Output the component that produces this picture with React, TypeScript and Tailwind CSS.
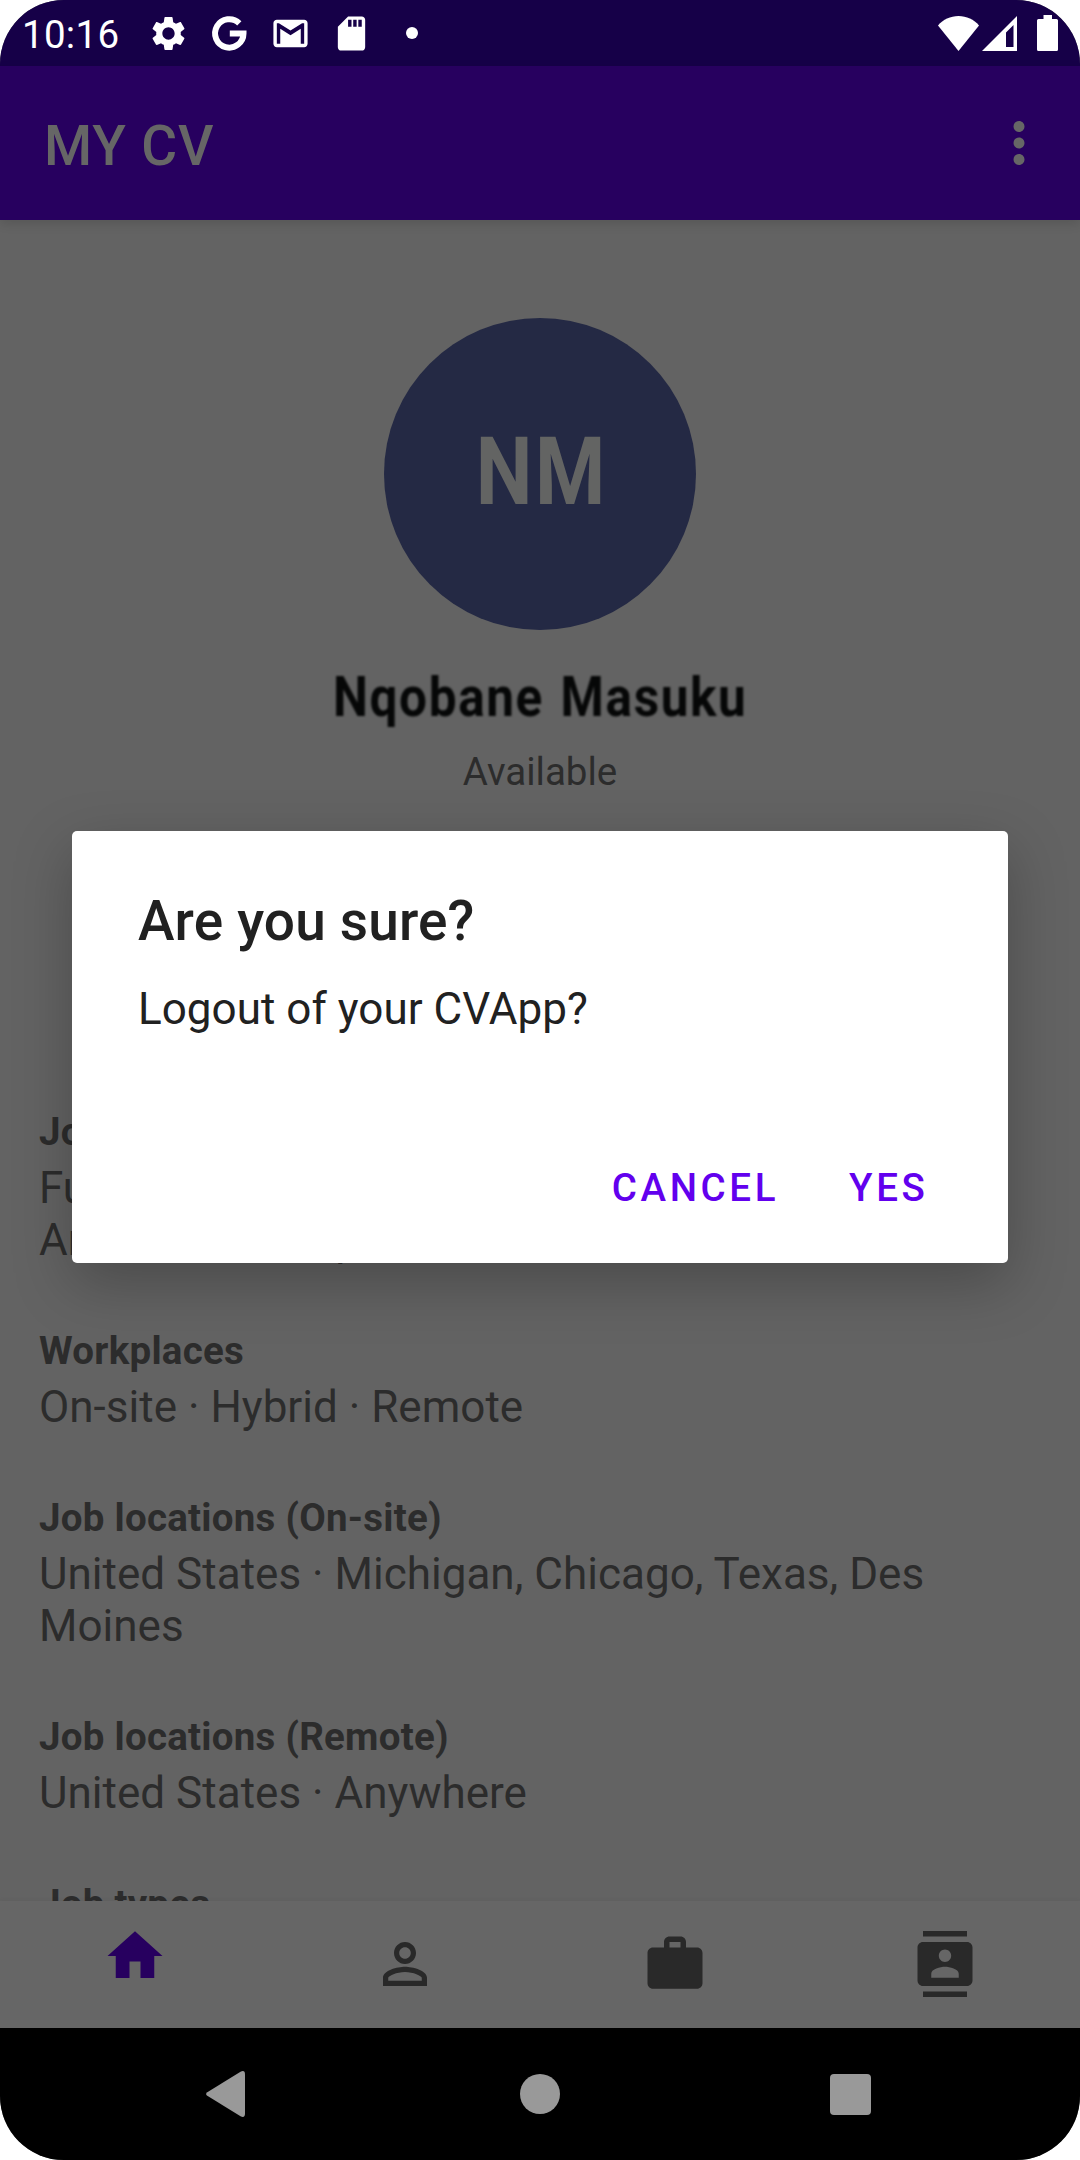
import type { ReactNode } from "react";

function Icon({ d, className = "" }: { d: string; className?: string }) {
  return (
    <svg viewBox="0 0 24 24" className={`shrink-0 ${className}`} fill="currentColor" fillRule="evenodd">
      <path d={d} />
    </svg>
  );
}

const icons = {
  gear: "M19.14 12.94c.04-.3.06-.61.06-.94 0-.32-.02-.64-.07-.94l2.03-1.58c.18-.14.23-.41.12-.61l-1.92-3.32c-.12-.22-.37-.29-.59-.22l-2.39.96c-.5-.38-1.03-.7-1.62-.94l-.36-2.54c-.04-.24-.24-.41-.48-.41h-3.84c-.24 0-.43.17-.47.41l-.36 2.54c-.59.24-1.13.57-1.62.94l-2.39-.96c-.22-.08-.47 0-.59.22L2.74 8.87c-.12.21-.08.47.12.61l2.03 1.58c-.05.3-.09.63-.09.94s.02.64.07.94l-2.03 1.58c-.18.14-.23.41-.12.61l1.92 3.32c.12.22.37.29.59.22l2.39-.96c.5.38 1.03.7 1.62.94l.36 2.54c.05.24.24.41.48.41h3.84c.24 0 .44-.17.47-.41l.36-2.54c.59-.24 1.13-.56 1.62-.94l2.39.96c.22.08.47 0 .59-.22l1.92-3.32c.12-.22.07-.47-.12-.61l-2.01-1.58zM12 15.6c-1.98 0-3.6-1.62-3.6-3.6s1.62-3.6 3.6-3.6 3.6 1.62 3.6 3.6-1.62 3.6-3.6 3.6z",
  mail: "M20 4H4c-1.1 0-2 .9-2 2v12c0 1.1.9 2 2 2h16c1.1 0 2-.9 2-2V6c0-1.1-.9-2-2-2zm0 14h-2V9.25L12 13 6 9.25V18H4V6h1.2l6.8 4.25L18.8 6H20v12z",
  sd: "M18 2h-8L4.02 8 4 20c0 1.1.9 2 2 2h12c1.1 0 2-.9 2-2V4c0-1.1-.9-2-2-2zm-6 6h-2V4h2v4zm3 0h-2V4h2v4zm3 0h-2V4h2v4z",
  more: "M12 8c1.1 0 2-.9 2-2s-.9-2-2-2-2 .9-2 2 .9 2 2 2zm0 2c-1.1 0-2 .9-2 2s.9 2 2 2 2-.9 2-2-.9-2-2-2zm0 6c-1.1 0-2 .9-2 2s.9 2 2 2 2-.9 2-2-.9-2-2-2z",
  home: "M10 20v-6h4v6h5v-8h3L12 3 2 12h3v8z",
  person:
    "M12 5.9c1.16 0 2.1.94 2.1 2.1s-.94 2.1-2.1 2.1S9.9 9.16 9.9 8s.94-2.1 2.1-2.1m0 9c2.97 0 6.1 1.46 6.1 2.1v1.1H5.9V17c0-.64 3.13-2.1 6.1-2.1M12 4C9.79 4 8 5.79 8 8s1.79 4 4 4 4-1.79 4-4-1.79-4-4-4zm0 9c-2.67 0-8 1.34-8 4v3h16v-3c0-2.66-5.33-4-8-4z",
  work: "M20 6h-4V4c0-1.11-.89-2-2-2h-4c-1.11 0-2 .89-2 2v2H4c-1.11 0-1.99.89-1.99 2L2 19c0 1.11.89 2 2 2h16c1.11 0 2-.89 2-2V8c0-1.11-.89-2-2-2zm-6 0h-4V4h4v2z",
  contacts:
    "M20 0H4v2h16V0zM4 24h16v-2H4v2zM20 4H4c-1.1 0-2 .9-2 2v12c0 1.1.9 2 2 2h16c1.1 0 2-.9 2-2V6c0-1.1-.9-2-2-2zm-8 2.75c1.24 0 2.25 1.01 2.25 2.25s-1.01 2.25-2.25 2.25S9.75 10.24 9.75 9 10.76 6.75 12 6.75zM17 17H7v-1.5c0-1.67 3.33-2.5 5-2.5s5 .83 5 2.5V17z",
};

function StatusBar() {
  return (
    <header className="flex h-[66px] items-center justify-between bg-[#160048] pl-[22px] pr-[22px] text-white">
      <div className="flex items-center">
        <span className="w-[125.5px] pt-[3px] text-[38.5px] leading-[63px] tracking-[0.3px]">10:16</span>
        <div className="flex items-center gap-[20px]">
          <Icon d={icons.gear} className="size-[41px]" />
          <svg viewBox="0 0 41 41" className="size-[41px] shrink-0" fill="none" stroke="currentColor" strokeWidth="6">
            <path d="M30.300 10.300A14.200 14.200 0 1 0 34.500 20.500H20.800" />
          </svg>
          <Icon d={icons.mail} className="size-[41px]" />
          <Icon d={icons.sd} className="size-[41px]" />
          <span className="mx-[14px] size-3 rounded-full bg-white" />
        </div>
      </div>
      <div className="flex items-center">
        <svg viewBox="0 0 41 35" className="mr-[3px] h-[35px] w-[41px]" fill="currentColor">
          <path d="M0 9.500C5 3.500 12.500 0 20.500 0S36 3.500 41 9.500L20.500 35z" />
        </svg>
        <svg viewBox="0 0 35 35" className="mr-5 h-[35px] w-[35px]" fill="currentColor" fillRule="evenodd">
          <path d="M35 0v35H0zM31.500 9l-7.500 7.500V31h7.500z" />
        </svg>
        <svg viewBox="0 0 21 36" className="h-9 w-[21px]" fill="currentColor">
          <path d="M6.500 0h8.500v4h4.500q1.500 0 1.500 1.500v29q0 1.500-1.500 1.500h-18q-1.500 0-1.500-1.500v-29q0-1.500 1.500-1.500h5z" />
        </svg>
      </div>
    </header>
  );
}

function Section({ title, children }: { title: string; children?: ReactNode }) {
  return (
    <section className="mb-[58.5px]">
      <h2 className="mb-[4.4px] text-[38.5px] font-bold leading-[52px] tracking-[0.25px]">{title}</h2>
      <p className="text-[44px] leading-[52px] tracking-[0.02px]">{children}</p>
    </section>
  );
}

function LogoutDialog() {
  return (
    <div
      role="dialog"
      className="absolute left-[72px] top-[831px] flex h-[432px] w-[936px] flex-col rounded-[5px] bg-white px-[66px] text-[#212121] shadow-[0_20px_58px_rgba(0,0,0,0.25)]"
    >
      <h2 className="mt-[58px] text-[55px] font-medium leading-[64px] tracking-[0.15px]">Are you sure?</h2>
      <p className="mt-[30px] text-[44px] leading-[52px] tracking-[0.03px]">Logout of your CVApp?</p>
      <div className="mt-auto mb-[43px] mr-[13.5px] flex justify-end gap-[70px] text-[38.5px] font-medium leading-[64px] tracking-[3.6px] text-[#6200ee]">
        <button>CANCEL</button>
        <button>YES</button>
      </div>
    </div>
  );
}

export default function App() {
  return (
    <div className="h-[2160px] w-[1080px] bg-white font-[Roboto,sans-serif]">
      <div className="relative flex h-full flex-col overflow-hidden rounded-[64px] bg-[#636363]">
        <StatusBar />
        <div className="relative z-10 flex h-[154px] items-center justify-between bg-[#27005f] pl-11 pr-[28px] text-[#666666] shadow-[0_4px_10px_rgba(0,0,0,0.12)]">
          <h1 className="pt-[6px] text-[55px] font-medium leading-[64px] tracking-[0.9px]">MY CV</h1>
          <Icon d={icons.more} className="size-[66px]" />
        </div>
        <main className="flex min-h-0 flex-1 flex-col overflow-hidden text-[#2c2c2c]">
          <div className="flex shrink-0 flex-col items-center pt-[98px]">
            <div className="flex size-[312px] items-center justify-center rounded-full bg-[#242944]">
              <span className="mb-[4px] ml-[4px] scale-x-[0.85] text-[94.6px] font-bold leading-none tracking-[3px] text-[#636463] blur-[0.6px]">
                NM
              </span>
            </div>
            <div className="mt-[35px] scale-x-[0.9] text-[55px] font-bold leading-[64px] tracking-[1.8px] text-[#060707] blur-[0.9px] [word-spacing:3px]">
              Nqobane Masuku
            </div>
            <div className="mt-[20px] text-[38.5px] leading-[46px]">Available</div>
          </div>
          <div className="mt-[311px] shrink-0 px-[39px]">
            <Section title="Job titles">
              Full Stack Developer
              <br />
              Android Developer
            </Section>
            <Section title="Workplaces">On-site · Hybrid · Remote</Section>
            <Section title="Job locations (On-site)">United States · Michigan, Chicago, Texas, Des Moines</Section>
            <Section title="Job locations (Remote)">United States · Anywhere</Section>
            <Section title="Job types" />
          </div>
        </main>
        <nav className="grid h-[127px] grid-cols-4 place-items-center bg-[#666666] pb-[1px] text-[#292929] shadow-[0_-1px_4px_rgba(0,0,0,0.05)]">
          <Icon d={icons.home} className="mb-4 size-[66px] text-[#27005f]" />
          <Icon d={icons.person} className="size-[66px]" />
          <Icon d={icons.work} className="size-[66px]" />
          <Icon d={icons.contacts} className="size-[66px]" />
        </nav>
        <div className="flex h-[132px] items-center bg-black pl-[206px] text-[#999999]">
          <svg viewBox="0 0 39 46" className="h-[46px] w-[39px]" fill="currentColor">
            <path d="M1.300 21.200 34.500.7Q39-1.500 39 3.500v39q0 5-4.500 2.800L1.300 24.800Q-1.100 23 1.300 21.200z" />
          </svg>
          <span className="ml-[275px] size-10 rounded-full bg-[#999999]" />
          <span className="ml-[270px] mt-[1px] h-[41px] w-[41px] rounded-[4px] bg-[#999999]" />
        </div>
        <LogoutDialog />
      </div>
    </div>
  );
}
